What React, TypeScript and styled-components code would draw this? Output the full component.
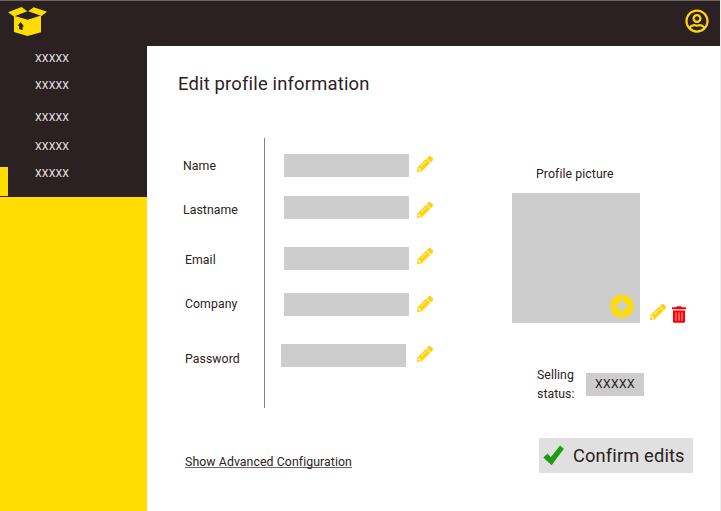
import React from "react";
import styled, { createGlobalStyle } from "styled-components";
import { FaPencilAlt, FaPlusCircle, FaRegUserCircle } from "react-icons/fa";

const GlobalStyle = createGlobalStyle`
  * { box-sizing: border-box; }
  body {
    margin: 0;
    background: #fff;
    color: #2b2122;
    font-family: Roboto, "Liberation Sans", sans-serif;
    overflow: hidden;
  }
`;

const Page = styled.div`
  width: 721px;
  height: 511px;
  display: flex;
  flex-direction: column;
  border-right: 1px solid #ededed;
`;

const Header = styled.header`
  flex: none;
  height: 46px;
  padding: 6px 11px 0 8px;
  display: flex;
  justify-content: space-between;
  align-items: flex-start;
  background: #2b2122;
  border-top: 1px solid #696263;
`;

const Avatar = styled(FaRegUserCircle)`
  width: 24px;
  height: 24px;
  margin-top: 2px;
  color: #ffd60a;
`;

const Body = styled.div`
  flex: 1;
  display: flex;
`;

const Sidebar = styled.aside`
  width: 147px;
  flex: none;
  background: #ffdd00;
`;

const Nav = styled.nav`
  position: relative;
  height: 151px;
  background: #2b2122;
`;

const ActiveMark = styled.span`
  position: absolute;
  left: 0;
  top: 121px;
  width: 8px;
  height: 29px;
  background: #ffdd00;
`;

const NavList = styled.div`
  padding-left: 35px;
  display: flex;
  flex-direction: column;
`;

const NavItem = styled.a<{ $gap: number }>`
  margin-top: ${(p) => p.$gap}px;
  height: 14px;
  line-height: 14px;
  font-size: 10.6px;
  letter-spacing: 0.2px;
  color: #e6e4e4;
`;

const Main = styled.main`
  flex: 1;
  display: flex;
`;

const FormSide = styled.section`
  width: 340px;
  padding: 25px 0 0 31px;
`;

const Title = styled.h1`
  margin: 0;
  height: 26px;
  line-height: 26px;
  font-size: 18.4px;
  font-weight: 400;
  letter-spacing: 0.18px;
  white-space: nowrap;
`;

const Fields = styled.div`
  height: 270px;
  margin-top: 41px;
  display: flex;
`;

const Labels = styled.div`
  width: 87px;
  flex: none;
  padding-left: 5px;
  border-right: 1px solid #85807f;
  display: flex;
  flex-direction: column;
`;

const Label = styled.label<{ $gap: number; $indent?: number }>`
  margin: ${(p) => p.$gap}px 0 0 ${(p) => p.$indent ?? 0}px;
  height: 16px;
  line-height: 16px;
  font-size: 12.3px;
  letter-spacing: 0.05px;
`;

const Inputs = styled.div`
  width: 145px;
  margin-left: 19px;
  flex: none;
  display: flex;
  flex-direction: column;
`;

const ValueBox = styled.div<{ $gap: number; $shift?: number }>`
  width: 125.4px;
  height: 23px;
  flex: none;
  margin: ${(p) => p.$gap}px 0 0 ${(p) => p.$shift ?? 0}px;
  background: #cdcdcd;
`;

const Pencils = styled.div`
  margin-left: -12px;
  display: flex;
  flex-direction: column;
`;

const Pencil = styled(FaPencilAlt)<{ $gap: number }>`
  width: 16px;
  height: 16px;
  flex: none;
  margin-top: ${(p) => p.$gap}px;
  color: #ffd30a;
  stroke: #ffd30a;
  stroke-width: 8px;
`;

const AdvancedLink = styled.a`
  display: block;
  width: 167px;
  height: 14px;
  margin: 46px 0 0 7px;
  line-height: 16px;
  font-size: 12.3px;
  letter-spacing: 0.08px;
  white-space: nowrap;
  border-bottom: 1px solid #6d6667;
`;

const PictureSide = styled.section`
  flex: 1;
  padding: 120px 0 0 25px;
`;

const PictureTitle = styled.div`
  margin-left: 24px;
  height: 16px;
  line-height: 16px;
  font-size: 12.3px;
  letter-spacing: 0.08px;
`;

const PictureRow = styled.div`
  display: flex;
  align-items: flex-end;
  margin-top: 11px;
`;

const Picture = styled.div`
  width: 128px;
  height: 130px;
  padding: 0 6px 5px 0;
  display: flex;
  align-items: flex-end;
  justify-content: flex-end;
  background: #cdcdcd;
`;

const Plus = styled(FaPlusCircle)`
  width: 24px;
  height: 24px;
  color: #ffdd00;
`;

const Actions = styled.div`
  display: flex;
  align-items: flex-start;
  height: 19px;
  margin-left: 10px;
  gap: 6px;
`;

const TrashSvg = styled.svg`
  margin-top: 2px;
`;

const StatusRow = styled.div`
  display: flex;
  margin: 43px 0 0 25px;
`;

const StatusLabel = styled.div`
  width: 49px;
  line-height: 19px;
  font-size: 12.3px;
  letter-spacing: 0.05px;
`;

const Status = styled.div`
  width: 58px;
  height: 23px;
  margin-top: 7px;
  line-height: 23px;
  text-align: center;
  font-size: 12.2px;
  letter-spacing: 0.4px;
  background: #cdcdcd;
`;

const Confirm = styled.button`
  width: 154px;
  height: 35px;
  margin: 34px 0 0 27px;
  padding: 0 0 0 4px;
  display: flex;
  align-items: center;
  gap: 9px;
  border: 0;
  background: #e0e0e0;
  color: #2b2122;
  font: 400 18.3px Roboto, sans-serif;
  letter-spacing: 0.14px;
  white-space: nowrap;
`;

const BoxLogo = () => (
  <svg width="40" height="30" viewBox="0 0 40 30">
    <path d="M0 5.3 13.5 0l5.8 4.2L6 9.4ZM20.2 4.2 25.7.3 39 4.7 33.6 9Z" fill="#ffdd00" />
    <path d="M6 8.8 19.7 12.7 33 8.6v16.7L19.5 29 6 25.1Z" fill="#ffdd00" />
    <path d="M8.3 9 19.7 4.8 31.4 8.6 19.7 12.3Z" fill="#2b2122" />
    <path d="m12.7 15-3 3.5 1.5.2v3.6l3.5.8v-3.8l1.5.4Z" fill="#2b2122" />
  </svg>
);

const TrashIcon = () => (
  <TrashSvg width="14" height="17" viewBox="0 0 14 17">
    <path d="M0 1.3h4.2L5 .2h4l.8 1.1H14V3.2H0Z" fill="#f00" />
    <path d="M1 4.4h12V15.5q0 1.2-1.2 1.2H2.2Q1 16.7 1 15.5Z" fill="#f00" />
    <path d="M4 6.5v8.3M7 6.5v8.3M10 6.5v8.3" stroke="#ffb3b3" strokeWidth="1" />
  </TrashSvg>
);

const CheckIcon = () => (
  <svg width="21" height="21" viewBox="0 0 21 21">
    <path d="M.3 12.6 4.6 8.6l3.2 3.6L17 .4l3.9 3.3L8.6 20.2Z" fill="#1f9d12" />
  </svg>
);

const navGaps = [6, 13, 18, 15, 13];

const fields = [
  { name: "Name", label: 20, indent: 0, box: 16, shift: 0, pencil: 18 },
  { name: "Lastname", label: 28, indent: 0, box: 19, shift: 0, pencil: 30 },
  { name: "Email", label: 34, indent: 2, box: 28, shift: 0, pencil: 30 },
  { name: "Company", label: 28, indent: 2, box: 23, shift: 0, pencil: 32 },
  { name: "Password", label: 39, indent: 2, box: 28, shift: -3, pencil: 34 },
];

export default function App() {
  return (
    <>
      <GlobalStyle />
      <Page>
        <Header>
          <BoxLogo />
          <Avatar />
        </Header>
        <Body>
          <Sidebar>
            <Nav>
              <NavList>
                {navGaps.map((gap, i) => (
                  <NavItem key={i} $gap={gap}>XXXXX</NavItem>
                ))}
              </NavList>
              <ActiveMark />
            </Nav>
          </Sidebar>
          <Main>
            <FormSide>
              <Title>Edit profile information</Title>
              <Fields>
                <Labels>
                  {fields.map((f) => (
                    <Label key={f.name} $gap={f.label} $indent={f.indent}>{f.name}</Label>
                  ))}
                </Labels>
                <Inputs>
                  {fields.map((f) => (
                    <ValueBox key={f.name} $gap={f.box} $shift={f.shift} />
                  ))}
                </Inputs>
                <Pencils>
                  {fields.map((f) => (
                    <Pencil key={f.name} $gap={f.pencil} />
                  ))}
                </Pencils>
              </Fields>
              <AdvancedLink>Show Advanced Configuration</AdvancedLink>
            </FormSide>
            <PictureSide>
              <PictureTitle>Profile picture</PictureTitle>
              <PictureRow>
                <Picture>
                  <Plus />
                </Picture>
                <Actions>
                  <Pencil $gap={0} />
                  <TrashIcon />
                </Actions>
              </PictureRow>
              <StatusRow>
                <StatusLabel>Selling status:</StatusLabel>
                <Status>XXXXX</Status>
              </StatusRow>
              <Confirm>
                <CheckIcon />
                Confirm edits
              </Confirm>
            </PictureSide>
          </Main>
        </Body>
      </Page>
    </>
  );
}
